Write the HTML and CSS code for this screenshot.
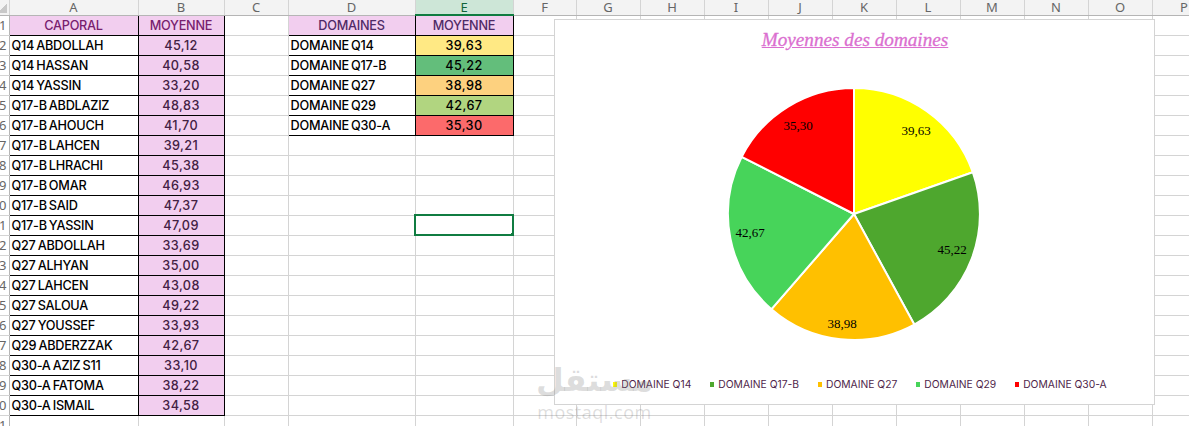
FILE: index.html
```html
<!DOCTYPE html>
<html>
<head>
    <meta charset="utf-8">
    <title>Moyennes des domaines</title>
    <link rel="stylesheet" href="styles.css">
</head>
<body>
    <div class="sheet">
        <table class="grid">
            <colgroup>
                <col class="col-head"><col class="col-a"><col class="col-b"><col class="col-c"><col class="col-d"><col class="col-e"><col class="col-f">
                <col class="col-std"><col class="col-std"><col class="col-std"><col class="col-std"><col class="col-std"><col class="col-std"><col class="col-std"><col class="col-std"><col class="col-std"><col class="col-p">
            </colgroup>
            <thead>
                <tr><th class="corner"></th><th>A</th><th>B</th><th>C</th><th>D</th><th class="picked">E</th><th>F</th><th>G</th><th>H</th><th>I</th><th>J</th><th>K</th><th>L</th><th>M</th><th>N</th><th>O</th><th class="last">P</th></tr>
            </thead>
            <tbody>
                <tr><th>1</th><td class="boxed title">CAPORAL</td><td class="boxed title">MOYENNE</td><td></td><td class="boxed title dark">DOMAINES</td><td class="boxed title dark">MOYENNE</td><td></td><td></td><td></td><td></td><td></td><td></td><td></td><td></td><td></td><td></td><td></td></tr>
                <tr><th>2</th><td class="boxed name">Q14 ABDOLLAH</td><td class="boxed avg">45,12</td><td></td><td class="boxed name">DOMAINE Q14</td><td class="boxed heat h-yellow">39,63</td><td></td><td></td><td></td><td></td><td></td><td></td><td></td><td></td><td></td><td></td><td></td></tr>
                <tr><th>3</th><td class="boxed name">Q14 HASSAN</td><td class="boxed avg">40,58</td><td></td><td class="boxed name">DOMAINE Q17-B</td><td class="boxed heat h-green">45,22</td><td></td><td></td><td></td><td></td><td></td><td></td><td></td><td></td><td></td><td></td><td></td></tr>
                <tr><th>4</th><td class="boxed name">Q14 YASSIN</td><td class="boxed avg">33,20</td><td></td><td class="boxed name">DOMAINE Q27</td><td class="boxed heat h-orange">38,98</td><td></td><td></td><td></td><td></td><td></td><td></td><td></td><td></td><td></td><td></td><td></td></tr>
                <tr><th>5</th><td class="boxed name">Q17-B ABDLAZIZ</td><td class="boxed avg">48,83</td><td></td><td class="boxed name">DOMAINE Q29</td><td class="boxed heat h-lime">42,67</td><td></td><td></td><td></td><td></td><td></td><td></td><td></td><td></td><td></td><td></td><td></td></tr>
                <tr><th>6</th><td class="boxed name">Q17-B AHOUCH</td><td class="boxed avg">41,70</td><td></td><td class="boxed name">DOMAINE Q30-A</td><td class="boxed heat h-red">35,30</td><td></td><td></td><td></td><td></td><td></td><td></td><td></td><td></td><td></td><td></td><td></td></tr>
                <tr><th>7</th><td class="boxed name">Q17-B LAHCEN</td><td class="boxed avg">39,21</td><td></td><td></td><td></td><td></td><td></td><td></td><td></td><td></td><td></td><td></td><td></td><td></td><td></td><td></td></tr>
                <tr><th>8</th><td class="boxed name">Q17-B LHRACHI</td><td class="boxed avg">45,38</td><td></td><td></td><td></td><td></td><td></td><td></td><td></td><td></td><td></td><td></td><td></td><td></td><td></td><td></td></tr>
                <tr><th>9</th><td class="boxed name">Q17-B OMAR</td><td class="boxed avg">46,93</td><td></td><td></td><td></td><td></td><td></td><td></td><td></td><td></td><td></td><td></td><td></td><td></td><td></td><td></td></tr>
                <tr><th>10</th><td class="boxed name">Q17-B SAID</td><td class="boxed avg">47,37</td><td></td><td></td><td></td><td></td><td></td><td></td><td></td><td></td><td></td><td></td><td></td><td></td><td></td><td></td></tr>
                <tr><th>11</th><td class="boxed name">Q17-B YASSIN</td><td class="boxed avg">47,09</td><td></td><td></td><td class="active"></td><td></td><td></td><td></td><td></td><td></td><td></td><td></td><td></td><td></td><td></td><td></td></tr>
                <tr><th>12</th><td class="boxed name">Q27 ABDOLLAH</td><td class="boxed avg">33,69</td><td></td><td></td><td></td><td></td><td></td><td></td><td></td><td></td><td></td><td></td><td></td><td></td><td></td><td></td></tr>
                <tr><th>13</th><td class="boxed name">Q27 ALHYAN</td><td class="boxed avg">35,00</td><td></td><td></td><td></td><td></td><td></td><td></td><td></td><td></td><td></td><td></td><td></td><td></td><td></td><td></td></tr>
                <tr><th>14</th><td class="boxed name">Q27 LAHCEN</td><td class="boxed avg">43,08</td><td></td><td></td><td></td><td></td><td></td><td></td><td></td><td></td><td></td><td></td><td></td><td></td><td></td><td></td></tr>
                <tr><th>15</th><td class="boxed name">Q27 SALOUA</td><td class="boxed avg">49,22</td><td></td><td></td><td></td><td></td><td></td><td></td><td></td><td></td><td></td><td></td><td></td><td></td><td></td><td></td></tr>
                <tr><th>16</th><td class="boxed name">Q27 YOUSSEF</td><td class="boxed avg">33,93</td><td></td><td></td><td></td><td></td><td></td><td></td><td></td><td></td><td></td><td></td><td></td><td></td><td></td><td></td></tr>
                <tr><th>17</th><td class="boxed name">Q29 ABDERZZAK</td><td class="boxed avg">42,67</td><td></td><td></td><td></td><td></td><td></td><td></td><td></td><td></td><td></td><td></td><td></td><td></td><td></td><td></td></tr>
                <tr><th>18</th><td class="boxed name">Q30-A AZIZ S11</td><td class="boxed avg">33,10</td><td></td><td></td><td></td><td></td><td></td><td></td><td></td><td></td><td></td><td></td><td></td><td></td><td></td><td></td></tr>
                <tr><th>19</th><td class="boxed name">Q30-A FATOMA</td><td class="boxed avg">38,22</td><td></td><td></td><td></td><td></td><td></td><td></td><td></td><td></td><td></td><td></td><td></td><td></td><td></td><td></td></tr>
                <tr><th>20</th><td class="boxed name">Q30-A ISMAIL</td><td class="boxed avg">34,58</td><td></td><td></td><td></td><td></td><td></td><td></td><td></td><td></td><td></td><td></td><td></td><td></td><td></td><td></td></tr>
                <tr><th>21</th><td></td><td></td><td></td><td></td><td></td><td></td><td></td><td></td><td></td><td></td><td></td><td></td><td></td><td></td><td></td><td></td></tr>
            </tbody>
        </table>

        <!-- chart floats over the cells like in the spreadsheet -->
        <div class="chart">
            <h2 class="chart-title">Moyennes des domaines</h2>
            <svg class="pie" width="262" height="262" viewBox="-131 -131 262 262">
                <g stroke="#fff" stroke-width="2" stroke-linejoin="round">
                    <path fill="#ffff00" d="M0 0V-126A126 126 0 0 1 118.8 -41.8Z"/>
                    <path fill="#4ea72e" d="M0 0L118.8 -41.8A126 126 0 0 1 60.3 110.6Z"/>
                    <path fill="#ffc000" d="M0 0L60.3 110.6A126 126 0 0 1 -82.5 95.2Z"/>
                    <path fill="#47d45a" d="M0 0L-82.5 95.2A126 126 0 0 1 -112.3 -57.2Z"/>
                    <path fill="#ff0000" d="M0 0L-112.3 -57.2A126 126 0 0 1 0 -126Z"/>
                </g>
                <g class="pie-label" text-anchor="middle">
                    <text x="62" y="-79">39,63</text>
                    <text x="98" y="40">45,22</text>
                    <text x="-12" y="114">38,98</text>
                    <text x="-104" y="23">42,67</text>
                    <text x="-56" y="-84">35,30</text>
                </g>
            </svg>
            <ul class="legend">
                <li><i class="key k-yellow"></i>DOMAINE Q14</li>
                <li><i class="key k-green"></i>DOMAINE Q17-B</li>
                <li><i class="key k-orange"></i>DOMAINE Q27</li>
                <li><i class="key k-lime"></i>DOMAINE Q29</li>
                <li><i class="key k-red"></i>DOMAINE Q30-A</li>
            </ul>
        </div>

        <!-- site watermark -->
        <div class="watermark">
            <div class="mark-ar" dir="rtl">مستقل</div>
            <div class="mark-en">mostaql.com</div>
        </div>
    </div>
</body>
</html>
```

FILE: styles.css
```css
html, body {
    margin: 0;
    height: 426px;
    overflow: hidden;
    background: #fff;
}
.sheet {
    position: relative;
    width: 1189px;
    height: 426px;
    overflow: hidden;
}

/* Worksheet grid */
.grid {
    border-collapse: collapse;
    table-layout: fixed;
    width: 1200px;
    font-family: "Inter", "Liberation Sans", sans-serif;
    font-size: 12.7px;
    font-weight: 500;
    letter-spacing: -0.25px;
    word-spacing: -1px;
    color: #000;
}
.col-head { width: 9px; }
.col-a { width: 129px; }
.col-b { width: 86px; }
.col-c { width: 64px; }
.col-d { width: 127px; }
.col-e { width: 98px; }
.col-f { width: 63px; }
.col-std { width: 64px; }
.col-p { width: 64px; }

.grid tr { height: 20px; }
.grid thead tr { height: 15px; }
.grid td {
    border: 1px solid #d4d4d4;
    padding: 0;
    overflow: hidden;
    white-space: nowrap;
}

/* Column and row headers */
.grid th {
    background: #f3f3f3;
    color: #666;
    font-family: "Noto Sans", sans-serif;
    font-size: 13px;
    font-weight: 400;
    letter-spacing: 0;
    line-height: 13px;
    padding: 0;
    overflow: hidden;
    border: 1px solid #d4d4d4;
    border-width: 0 1px 0 0;
}
.grid thead th {
    border-bottom: 1px solid #b5b5b5;
}
.grid th.corner {
    background: linear-gradient(135deg, #f3f3f3 50%, #c8c8c8 50%) no-repeat 0 1px / 7px 12px #f3f3f3;
}
.grid tbody th {
    direction: rtl;
    text-align: right;
    padding-right: 2px;
    background: #fff;
    border-bottom: 1px solid #d4d4d4;
    border-right: 1px solid #b5b5b5;
}
.grid th.picked {
    background: #cde6d7;
    color: #10633a;
    border-bottom: 2px solid #107c41;
}

/* Filled data cells */
.grid td.boxed {
    border: 1px solid #000;
}
.title {
    background: #f2ceef;
    color: #78206e;
    text-align: center;
}
.title.dark { color: #4f2a66; }
.name { padding-left: 2px !important; }
.avg {
    background: #f2ceef;
    color: #432143;
    text-align: center;
    letter-spacing: 0.4px;
}
.heat {
    text-align: center;
    letter-spacing: 0.4px;
}
.h-yellow { background: #ffe984; }
.h-green { background: #63be7b; }
.h-orange { background: #fdd17f; }
.h-lime { background: #b1d580; }
.h-red { background: #fc6a6b; }

.grid td.active {
    position: relative;
    outline: 2px solid #107c41;
    outline-offset: -1px;
}
.active::after {
    content: "";
    position: absolute;
    right: -2px;
    bottom: -2px;
    width: 4px;
    height: 4px;
    background: #107c41;
}

/* Chart */
.chart {
    position: absolute;
    left: 554px;
    top: 19px;
    width: 601px;
    height: 386px;
    box-sizing: border-box;
    background: #fff;
    border: 1px solid #d4d4d4;
    display: flex;
    flex-direction: column;
    align-items: center;
}
.chart-title {
    margin: 9px 0 0 1px;
    font-family: "Liberation Serif", serif;
    font-size: 19.2px;
    font-weight: 400;
    font-style: italic;
    line-height: 22px;
    color: #db6fd0;
    text-decoration: underline;
    -webkit-text-stroke: 0.3px #db6fd0;
}
.pie {
    display: block;
    margin: 32px 2px 0 0;
}
.pie-label {
    font-family: "Liberation Serif", serif;
    font-size: 13px;
    fill: #000;
}
.legend {
    list-style: none;
    margin: 33px 0 0 11px;
    padding: 0;
    display: flex;
    gap: 19px;
    font-family: "Inter", "Liberation Sans", sans-serif;
    font-size: 10.3px;
    color: #4f1f4a;
}
.legend li {
    display: flex;
    align-items: center;
    line-height: 13px;
}
.key {
    width: 4px;
    height: 5px;
    margin-right: 4px;
}
.k-yellow { background: #ffff00; }
.k-green { background: #4ea72e; }
.k-orange { background: #ffc000; }
.k-lime { background: #47d45a; }
.k-red { background: #ff0000; }

/* Watermark */
.watermark {
    position: absolute;
    left: 537px;
    top: 358px;
    width: 115px;
    display: flex;
    flex-direction: column;
    align-items: center;
    color: rgba(120, 120, 120, 0.25);
    pointer-events: none;
}
.mark-ar {
    font-family: "DejaVu Sans", sans-serif;
    font-size: 32px;
    font-weight: 700;
    line-height: 44px;
    white-space: nowrap;
}
.mark-en {
    font-family: "Open Sans", sans-serif;
    font-size: 18px;
    line-height: 20px;
    letter-spacing: 0.5px;
}
```
